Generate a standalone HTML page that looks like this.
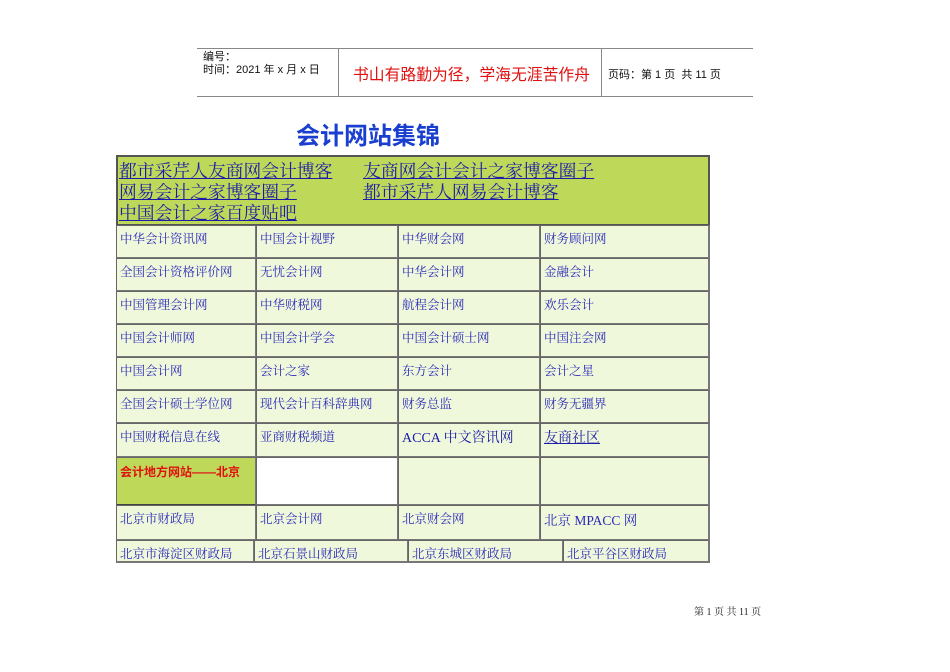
<!DOCTYPE html>
<html><head><meta charset="utf-8"><style>
body{margin:0;width:950px;height:672px;background:#fff;position:relative;overflow:hidden;font-family:"Liberation Sans","Noto Sans CJK SC",sans-serif}
.a{position:absolute}
.c{position:absolute;background:#f0f8dc;border:1px solid #666;box-sizing:border-box;border-right:2px solid #777;border-bottom:2px solid #777;font-family:"Liberation Serif","Noto Serif CJK SC",serif;font-size:12.5px;color:#2a2ab8;padding:3px 0 0 3px;white-space:nowrap;overflow:hidden}
.h{font-family:"Liberation Serif","Noto Serif CJK SC",serif;font-size:17.8px;color:#1c1ca8;text-decoration:underline;line-height:21px;white-space:nowrap}
</style></head><body>
<div class="a" style="left:197px;top:48px;width:556px;height:0;border-top:1px solid #888"></div>
<div class="a" style="left:197px;top:96px;width:556px;height:0;border-top:1px solid #888"></div>
<div class="a" style="left:338px;top:48px;width:0;height:48px;border-left:1px solid #888"></div>
<div class="a" style="left:601px;top:48px;width:0;height:48px;border-left:1px solid #888"></div>
<div class="a" style="left:203px;top:51px;font-size:11px;line-height:13px;color:#111">编号：<br>时间：2021 年 x 月 x 日</div>
<div class="a" style="left:353px;top:62px;font-size:15.8px;color:#e01010">书山有路勤为径，学海无涯苦作舟</div>
<div class="a" style="left:608px;top:66px;font-size:11px;color:#111">页码：第 1 页&nbsp; 共 11 页</div>
<div class="a" style="left:296px;top:116px;font-size:24px;font-weight:bold;color:#1a3fd0">会计网站集锦</div>

<div class="a" style="left:116px;top:155px;width:594px;height:70px;background:#bed95a;border:2px solid #555;border-bottom:1px solid #555;box-sizing:border-box"></div>
<div class="a h" style="left:119px;top:161px">都市采芹人友商网会计博客</div>
<div class="a h" style="left:119px;top:182px">网易会计之家博客圈子</div>
<div class="a h" style="left:119px;top:203px">中国会计之家百度贴吧</div>
<div class="a h" style="left:363px;top:161px">友商网会计会计之家博客圈子</div>
<div class="a h" style="left:363px;top:182px">都市采芹人网易会计博客</div>

<div class="c" style="left:116px;top:225px;width:141px;height:34px">中华会计资讯网</div>
<div class="c" style="left:256px;top:225px;width:143px;height:34px">中国会计视野</div>
<div class="c" style="left:398px;top:225px;width:143px;height:34px">中华财会网</div>
<div class="c" style="left:540px;top:225px;width:170px;height:34px">财务顾问网</div>

<div class="c" style="left:116px;top:258px;width:141px;height:34px">全国会计资格评价网</div>
<div class="c" style="left:256px;top:258px;width:143px;height:34px">无忧会计网</div>
<div class="c" style="left:398px;top:258px;width:143px;height:34px">中华会计网</div>
<div class="c" style="left:540px;top:258px;width:170px;height:34px">金融会计</div>

<div class="c" style="left:116px;top:291px;width:141px;height:34px">中国管理会计网</div>
<div class="c" style="left:256px;top:291px;width:143px;height:34px">中华财税网</div>
<div class="c" style="left:398px;top:291px;width:143px;height:34px">航程会计网</div>
<div class="c" style="left:540px;top:291px;width:170px;height:34px">欢乐会计</div>

<div class="c" style="left:116px;top:324px;width:141px;height:34px">中国会计师网</div>
<div class="c" style="left:256px;top:324px;width:143px;height:34px">中国会计学会</div>
<div class="c" style="left:398px;top:324px;width:143px;height:34px">中国会计硕士网</div>
<div class="c" style="left:540px;top:324px;width:170px;height:34px">中国注会网</div>

<div class="c" style="left:116px;top:357px;width:141px;height:34px">中国会计网</div>
<div class="c" style="left:256px;top:357px;width:143px;height:34px">会计之家</div>
<div class="c" style="left:398px;top:357px;width:143px;height:34px">东方会计</div>
<div class="c" style="left:540px;top:357px;width:170px;height:34px">会计之星</div>

<div class="c" style="left:116px;top:390px;width:141px;height:34px">全国会计硕士学位网</div>
<div class="c" style="left:256px;top:390px;width:143px;height:34px">现代会计百科辞典网</div>
<div class="c" style="left:398px;top:390px;width:143px;height:34px">财务总监</div>
<div class="c" style="left:540px;top:390px;width:170px;height:34px">财务无疆界</div>

<div class="c" style="left:116px;top:423px;width:141px;height:35px">中国财税信息在线</div>
<div class="c" style="left:256px;top:423px;width:143px;height:35px">亚商财税频道</div>
<div class="c" style="left:398px;top:423px;width:143px;height:35px;font-size:14px;color:#1a1aa8">ACCA 中文咨讯网</div>
<div class="c" style="left:540px;top:423px;width:170px;height:35px;font-size:14px;color:#1c1ca8;text-decoration:underline">友商社区</div>

<div class="c" style="left:116px;top:457px;width:141px;height:49px;background:#bed95a;color:#e01010;font-weight:bold;font-family:'Liberation Sans','Noto Sans CJK SC',sans-serif;font-size:12px;padding-top:5px;border-bottom:2px solid #444">会计地方网站——北京</div>
<div class="c" style="left:256px;top:457px;width:143px;height:49px;background:#fff"></div>
<div class="c" style="left:398px;top:457px;width:143px;height:49px"></div>
<div class="c" style="left:540px;top:457px;width:170px;height:49px"></div>

<div class="c" style="left:116px;top:505px;width:141px;height:36px">北京市财政局</div>
<div class="c" style="left:256px;top:505px;width:143px;height:36px">北京会计网</div>
<div class="c" style="left:398px;top:505px;width:143px;height:36px">北京财会网</div>
<div class="c" style="left:540px;top:505px;width:170px;height:36px;font-size:13.5px">北京 MPACC 网</div>

<div class="c" style="left:116px;top:540px;width:139px;height:23px">北京市海淀区财政局</div>
<div class="c" style="left:254px;top:540px;width:155px;height:23px">北京石景山财政局</div>
<div class="c" style="left:408px;top:540px;width:156px;height:23px">北京东城区财政局</div>
<div class="c" style="left:563px;top:540px;width:147px;height:23px">北京平谷区财政局</div>

<div class="a" style="left:694px;top:603px;font-size:10px;color:#222;font-family:'Liberation Serif','Noto Serif CJK SC',serif">第 1 页 共 11 页</div>
</body></html>
